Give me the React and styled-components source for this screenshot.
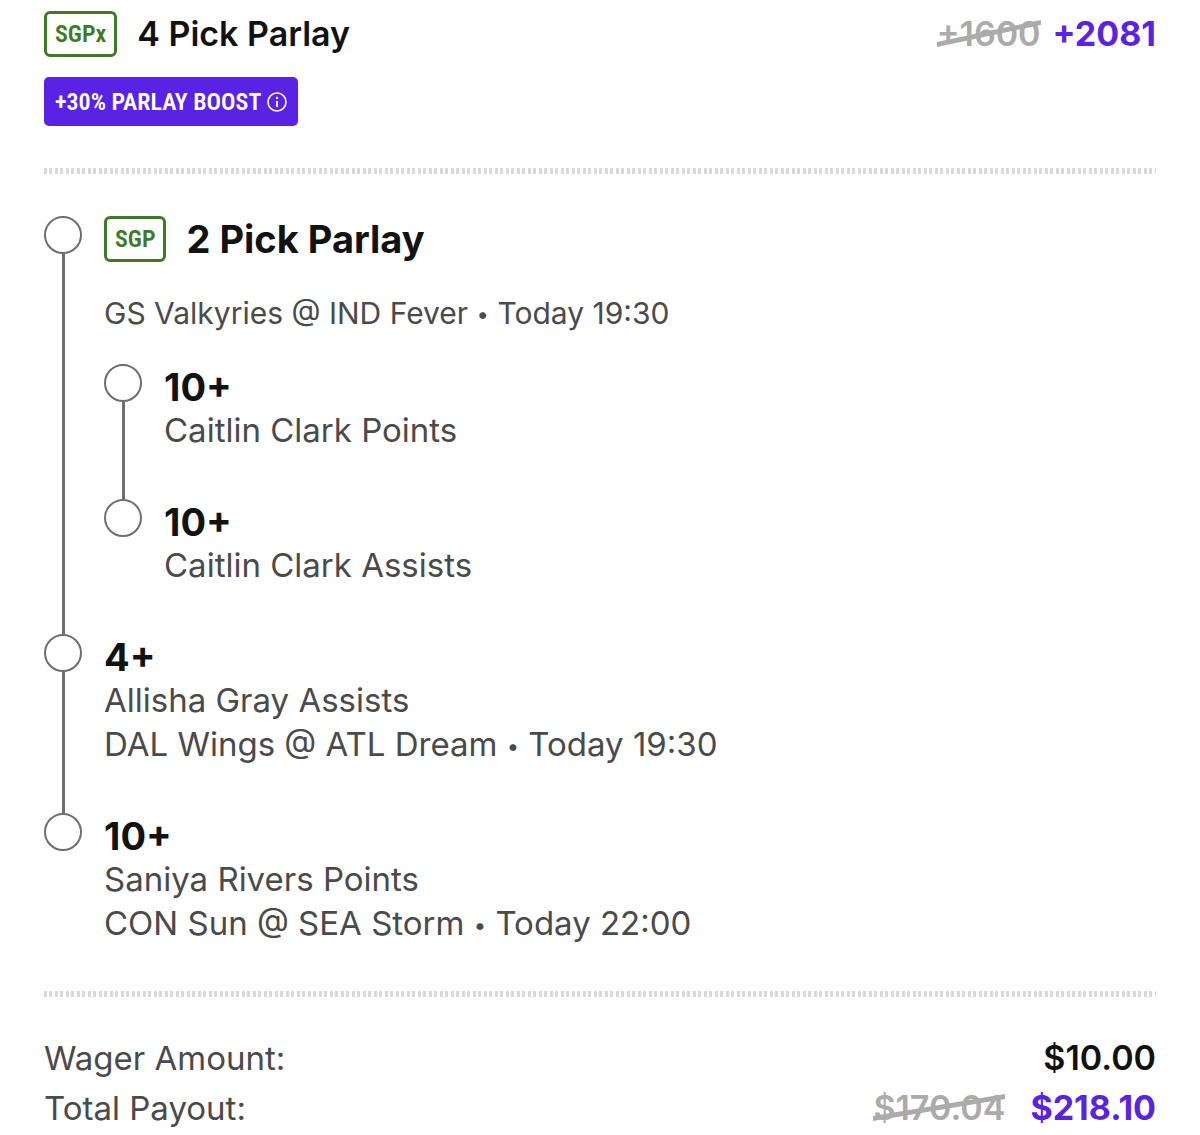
import styled, { createGlobalStyle } from 'styled-components';

const GlobalStyle = createGlobalStyle`
  * {
    box-sizing: border-box;
  }

  body {
    margin: 0;
    background: #ffffff;
    color: #4a4a4a;
    font-family: Inter, 'Liberation Sans', sans-serif;
    font-size: 33px;
    line-height: 44px;
  }
`;

const Slip = styled.main`
  padding: 11px 44px 0;
`;

const Header = styled.header`
  display: flex;
  align-items: center;
  justify-content: space-between;
`;

const TitleRow = styled.div`
  display: flex;
  align-items: center;
  gap: 20px;
`;

const Title = styled.h1`
  margin: 0;
  color: #121212;
  font-size: 34px;
  font-weight: 600;
  line-height: 46px;
`;

const GroupTitle = styled.h2`
  margin: 0;
  color: #121212;
  font-size: 38px;
  font-weight: 700;
  line-height: 46px;
`;

const Badge = styled.span`
  display: inline-flex;
  align-items: center;
  height: 46px;
  padding: 0 8px;
  border: 3px solid #3d7a26;
  border-radius: 6px;
  color: #3d7a26;
  font-family: 'Roboto Condensed', Roboto, sans-serif;
  font-size: 24px;
  font-weight: 600;
`;

const BoostButton = styled.button`
  display: flex;
  align-items: center;
  gap: 6px;
  height: 49px;
  margin-top: 20px;
  padding: 0 11px;
  border: 0;
  border-radius: 5px;
  background: #5a22e4;
  color: #ffffff;
  font-family: 'Roboto Condensed', Roboto, sans-serif;
  font-size: 24px;
  font-weight: 600;
  cursor: pointer;
`;

const Divider = styled.hr`
  height: 6px;
  margin: ${({ $space }) => $space};
  border: 0;
  background: repeating-linear-gradient(
    to right,
    #d9d9d9 0 3px,
    transparent 3px 5px,
    #d9d9d9 5px 8px,
    transparent 8px 11px
  );
`;

const Prices = styled.div`
  display: flex;
  gap: ${({ $gap }) => $gap};
`;

const Price = styled.span`
  color: ${({ $boosted }) => ($boosted ? '#5a22e4' : '#121212')};
  font-size: 34px;
  font-weight: ${({ $boosted }) => ($boosted ? 700 : 600)};
`;

const OldPrice = styled.del`
  position: relative;
  color: #ababab;
  font-size: 34px;
  font-weight: 600;
  text-decoration: none;
`;

const Slash = styled.svg`
  position: absolute;
  top: calc(50% - 14px);
  left: 0;
  width: 100%;
  height: 28px;
`;

const Legs = styled.ol`
  margin: 0;
  padding: 0;
  list-style: none;
`;

const LegItem = styled.li`
  display: grid;
  grid-template-columns: 38px 1fr;
  column-gap: 22px;
`;

const Track = styled.div`
  display: flex;
  flex-direction: column;
  align-items: center;
`;

const Dot = styled.span`
  width: 38px;
  height: 38px;
  flex: none;
  border: 2px solid #6e6e6e;
  border-radius: 50%;
`;

const Line = styled.span`
  flex: 1;
  width: 3px;
  background: #6e6e6e;
`;

const LegBody = styled.div`
  padding-bottom: ${({ $last }) => ($last ? '0' : '47px')};
`;

const Pick = styled.h3`
  margin: 0 0 -2px;
  color: #121212;
  font-size: 38px;
  font-weight: 700;
  line-height: 46px;
`;

const Detail = styled.p`
  margin: 0;
`;

const Matchup = styled.p`
  margin: 29px 0;
  font-size: 30px;
`;

const Bullet = styled.span`
  font-size: 22px;
  line-height: 1;
  vertical-align: 2px;
`;

const Totals = styled.dl`
  margin: 0;
`;

const TotalRow = styled.div`
  display: flex;
  justify-content: space-between;
  line-height: 50px;
`;

const Amount = styled.dd`
  margin: 0;
`;

const InfoIcon = () => (
  <svg width="20" height="20" viewBox="0 0 20 20" fill="none" aria-hidden="true">
    <circle cx="10" cy="10" r="9" stroke="currentColor" strokeWidth="1.6" />
    <circle cx="10" cy="6" r="1.2" fill="currentColor" />
    <path d="M10 9v6" stroke="currentColor" strokeWidth="1.8" />
  </svg>
);

const Struck = ({ children }) => (
  <OldPrice>
    {children}
    <Slash viewBox="0 0 100 28" preserveAspectRatio="none" aria-hidden="true">
      <path d="M0 22 L100 0 V5 L0 27 Z" fill="#ababab" />
    </Slash>
  </OldPrice>
);

const Game = ({ teams, time }) => (
  <>
    {teams} <Bullet>•</Bullet> {time}
  </>
);

const Leg = ({ last, children }) => (
  <LegItem>
    <Track>
      <Dot />
      {!last && <Line />}
    </Track>
    <LegBody $last={last}>{children}</LegBody>
  </LegItem>
);

export default function App() {
  return (
    <>
      <GlobalStyle />
      <Slip>
        <Header>
          <TitleRow>
            <Badge>SGPx</Badge>
            <Title>4 Pick Parlay</Title>
          </TitleRow>
          <Prices $gap="12px">
            <Struck>+1600</Struck>
            <Price $boosted>+2081</Price>
          </Prices>
        </Header>
        <BoostButton type="button">
          +30% PARLAY BOOST
          <InfoIcon />
        </BoostButton>

        <Divider $space="42px 0" />

        <Legs>
          <Leg>
            <TitleRow>
              <Badge>SGP</Badge>
              <GroupTitle>2 Pick Parlay</GroupTitle>
            </TitleRow>
            <Matchup>
              <Game teams="GS Valkyries @ IND Fever" time="Today 19:30" />
            </Matchup>
            <Legs>
              <Leg>
                <Pick>10+</Pick>
                <Detail>Caitlin Clark Points</Detail>
              </Leg>
              <Leg last>
                <Pick>10+</Pick>
                <Detail>Caitlin Clark Assists</Detail>
              </Leg>
            </Legs>
          </Leg>
          <Leg>
            <Pick>4+</Pick>
            <Detail>Allisha Gray Assists</Detail>
            <Detail>
              <Game teams="DAL Wings @ ATL Dream" time="Today 19:30" />
            </Detail>
          </Leg>
          <Leg last>
            <Pick>10+</Pick>
            <Detail>Saniya Rivers Points</Detail>
            <Detail>
              <Game teams="CON Sun @ SEA Storm" time="Today 22:00" />
            </Detail>
          </Leg>
        </Legs>

        <Divider $space="46px 0 36px" />

        <Totals>
          <TotalRow>
            <dt>Wager Amount:</dt>
            <Amount>
              <Price>$10.00</Price>
            </Amount>
          </TotalRow>
          <TotalRow>
            <dt>Total Payout:</dt>
            <Amount>
              <Prices $gap="25px">
                <Struck>$170.04</Struck>
                <Price $boosted>$218.10</Price>
              </Prices>
            </Amount>
          </TotalRow>
        </Totals>
      </Slip>
    </>
  );
}
